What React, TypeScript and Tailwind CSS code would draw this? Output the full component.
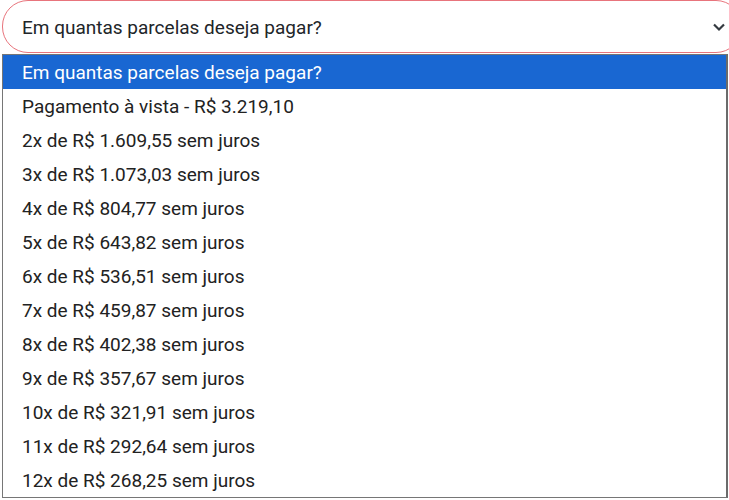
import React from "react";

const options = [
  "Pagamento à vista - R$ 3.219,10",
  "2x de R$ 1.609,55 sem juros",
  "3x de R$ 1.073,03 sem juros",
  "4x de R$ 804,77 sem juros",
  "5x de R$ 643,82 sem juros",
  "6x de R$ 536,51 sem juros",
  "7x de R$ 459,87 sem juros",
  "8x de R$ 402,38 sem juros",
  "9x de R$ 357,67 sem juros",
  "10x de R$ 321,91 sem juros",
  "11x de R$ 292,64 sem juros",
  "12x de R$ 268,25 sem juros",
];

export default function App() {
  return (
    <div
      className="w-[729px] h-[500px] bg-white overflow-hidden relative"
      style={{ fontFamily: "Roboto, 'Liberation Sans', sans-serif" }}
    >
      <div className="ml-[2px] w-[740px] h-[53px] border border-[#e8747c] rounded-[26px] flex items-center pl-[19px] pt-[3px] text-[19px] text-[#212529]">
        <span>Em quantas parcelas deseja pagar?</span>
      </div>
      <svg
        className="absolute left-[712px] top-[21px]"
        width="14"
        height="12"
        viewBox="0 0 14 12"
        fill="none"
      >
        <path d="M2 3.5 L7 8.5 L12 3.5" stroke="#343a40" strokeWidth="2.2" />
      </svg>
      <div className="ml-[2px] mt-[1px] w-[726px] border border-[#767676] border-r-[2px] border-r-[#6b6b6b] text-[19px] text-[#222]">
        <div className="h-[34px] bg-[#1967d2] text-white flex items-center pl-[19px] pt-[3px]">
          Em quantas parcelas deseja pagar?
        </div>
        {options.map((o) => (
          <div key={o} className="h-[34px] flex items-center pl-[19px] pt-[3px]">
            {o}
          </div>
        ))}
      </div>
    </div>
  );
}
